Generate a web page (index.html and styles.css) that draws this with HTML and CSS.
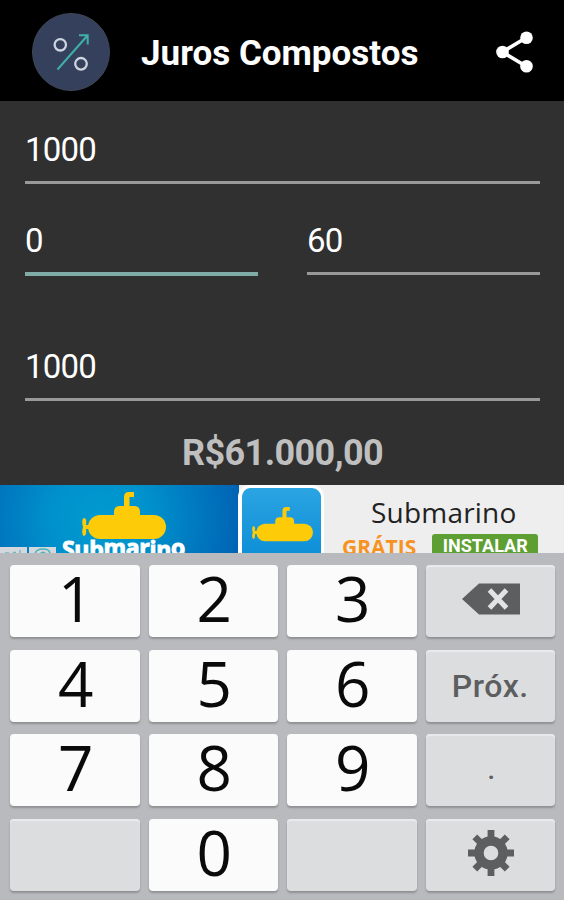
FILE: index.html
```
<!DOCTYPE html>
<html lang="pt-BR">
    <head>
        <meta charset="utf-8">
        <title>Juros Compostos</title>
        <link rel="stylesheet" href="styles.css">
    </head>
    <body>
        <header class="toolbar">
            <svg class="logo" viewBox="0 0 78 78">
                <circle cx="39" cy="39" r="38.5" fill="#34405c" stroke="#404956"/>
                <g fill="none" stroke="#ccd4df" stroke-width="2.3">
                    <circle cx="28.3" cy="31.8" r="5.7"/>
                    <circle cx="49" cy="50.8" r="5.8"/>
                </g>
                <path d="M25.5 56.5 55.5 22.5M47 22.3H55.7V31.5" fill="none" stroke="#3fafaa" stroke-width="2"/>
            </svg>
            <h1>Juros Compostos</h1>
            <svg class="share" viewBox="0 0 40 42">
                <path d="M31.5 6.5 7.5 21 31.5 35.5" fill="none" stroke="#fff" stroke-width="3.6"/>
                <g fill="#fff">
                    <circle cx="31.5" cy="6.7" r="6.3"/>
                    <circle cx="7.5" cy="21" r="6.3"/>
                    <circle cx="31.5" cy="35.2" r="6.3"/>
                </g>
            </svg>
        </header>

        <main class="form">
            <div class="field">1000</div>
            <div class="row">
                <div class="field active">0</div>
                <div class="field">60</div>
            </div>
            <div class="field deposit">1000</div>
            <div class="total">R$61.000,00</div>
        </main>

        <section class="ad">
            <div class="banner">
                <svg class="sub" viewBox="0 0 84 48">
                    <use href="#submarine"/>
                </svg>
                <div class="brand">Sub<span class="up">mar</span>in<span class="up">o</span></div>
                <div class="choices">
                    <i><svg viewBox="0 0 27 7"><path d="M5 6H9M13 5.5H16M20 3V7" stroke="#65b9b9" stroke-width="1.3"/></svg></i>
                    <i><svg viewBox="0 0 27 7"><path d="M6 7Q7 2 14 2T21 7M11 7Q14 3.5 17 7" fill="none" stroke="#45b5bd" stroke-width="1.5"/></svg></i>
                </div>
            </div>
            <div class="app">
                <svg viewBox="0 0 84 48">
                    <g id="submarine" fill="#fecb09">
                        <rect x="6" y="23" width="78" height="24" rx="12"/>
                        <path d="M32 25V20Q32 14 38 14H42V5Q42 0 47 0H52V5H47.5V14H52Q58 14 58 20V25Z"/>
                        <path d="M7 33 4 33Q5 26 2 26Q-1 27 1 35Q-1 43 2 44Q5 43 4 37L7 37Z"/>
                    </g>
                </svg>
            </div>
            <div class="info">
                <div class="name">Submarino</div>
                <div class="offer"><b>GRÁTIS</b><span>INSTALAR</span></div>
            </div>
        </section>

        <section class="keyboard">
            <div class="key">1</div>
            <div class="key">2</div>
            <div class="key">3</div>
            <div class="key fn">
                <svg class="backspace" width="58" height="32" viewBox="0 0 58 32">
                    <path d="M0 16 17 .5H58V31.5H17Z" fill="#5d5e5f"/>
                    <path d="M27.5 7 44.500 25M44.500 7 27.500 25" stroke="#e2e3e4" stroke-width="5"/>
                </svg>
            </div>
            <div class="key">4</div>
            <div class="key">5</div>
            <div class="key">6</div>
            <div class="key fn next">Próx.</div>
            <div class="key">7</div>
            <div class="key">8</div>
            <div class="key">9</div>
            <div class="key fn dot">.</div>
            <div class="key fn"></div>
            <div class="key">0</div>
            <div class="key fn"></div>
            <div class="key fn">
                <svg class="gear" width="46" height="46" viewBox="-22 -22 44 44">
                    <circle r="11.5" fill="none" stroke="#5d5e5f" stroke-width="9"/>
                    <g stroke="#5d5e5f" stroke-width="6.5">
                        <path d="M0-22V-13M0 22V13M-22 0H-13M22 0H13"/>
                        <path d="M-15.5-15.5-9-9M15.5-15.5 9-9M-15.5 15.5-9 9M15.5 15.5 9 9"/>
                    </g>
                </svg>
            </div>
        </section>
    </body>
</html>
```
FILE: styles.css
```
* {
    box-sizing: border-box;
}

body {
    margin: 0;
    width: 564px;
    height: 900px;
    overflow: hidden;
    display: flex;
    flex-direction: column;
    background: #303030;
    font-family: Roboto, sans-serif;
}

.toolbar {
    height: 101px;
    flex: none;
    display: flex;
    align-items: center;
    padding: 3px 29px 0 32px;
    background: #000;
    color: #fff;
}

.logo {
    width: 78px;
    height: 78px;
    margin-right: 31px;
}

h1 {
    margin: 3px 0 0;
    font-size: 35px;
    font-weight: 700;
    white-space: nowrap;
}

.share {
    width: 40px;
    height: 42px;
    margin-left: auto;
}

.form {
    height: 384px;
    flex: none;
    padding: 21px 24px 0 25px;
    color: #fff;
}

.field {
    height: 62px;
    flex: 1;
    padding-top: 8px;
    border-bottom: 3px solid #999;
    font-size: 33px;
    letter-spacing: -0.8px;
    line-height: 39px;
}

.row {
    display: flex;
    gap: 49px;
    margin-top: 29px;
}

.active {
    height: 63px;
    border-bottom: 4px solid #80aca8;
}

.deposit {
    margin-top: 63px;
}

.total {
    margin-top: 30px;
    text-align: center;
    font-size: 36px;
    font-weight: 700;
    letter-spacing: -0.6px;
    line-height: 44px;
    color: #bfbfbf;
}

.ad {
    height: 68px;
    flex: none;
    display: flex;
    overflow: hidden;
    background: #eee;
}

.banner {
    position: relative;
    width: 239px;
    background: radial-gradient(circle at 42% 50%, #009ad0 0, #0091cc 35%, #0062b4 100%);
}

.sub {
    display: block;
    width: 84px;
    height: 48px;
    margin: 7px 0 0 82px;
}

.brand {
    position: absolute;
    left: 62px;
    top: 50px;
    color: #fff;
    font: 700 23px/28px "Open Sans", sans-serif;
    letter-spacing: -0.3px;
    -webkit-text-stroke: 1px #fff;
    white-space: nowrap;
}

.up {
    position: relative;
    top: -2px;
}

.choices {
    position: absolute;
    left: 0;
    bottom: 0;
    display: flex;
    gap: 2px;
}

.choices i {
    width: 27px;
    height: 6px;
    background: #d4d8dc;
}

.choices svg {
    display: block;
    width: 27px;
    height: 7px;
}

.app {
    width: 86px;
    height: 84px;
    margin-left: -1px;
    flex: none;
    position: relative;
    border: 3px solid #fff;
    border-left-width: 4px;
    border-bottom: 0;
    border-radius: 12px;
    background: linear-gradient(#2ba4e2, #078bd5);
}

.app svg {
    width: 61px;
    height: 35px;
    margin: 19px 0 0 10px;
}

.info {
    flex: 1;
}

.name {
    padding: 8px 0 0 47px;
    color: #222;
    font: 400 28px/38px "Open Sans", sans-serif;
    letter-spacing: 0.2px;
}

.offer {
    display: flex;
    gap: 16px;
    padding: 3px 0 0 18px;
}

.offer b {
    color: #f7931e;
    font: 700 21px/27px "Open Sans", sans-serif;
}

.offer span {
    width: 106px;
    height: 30px;
    border-radius: 3px;
    background: #5d9f32;
    color: #fff;
    text-align: center;
    font-size: 18px;
    font-weight: 700;
    line-height: 23px;
}

.keyboard {
    height: 347px;
    flex: none;
    display: grid;
    grid-template-columns: repeat(4, 1fr);
    grid-template-rows: repeat(4, 72px);
    gap: 12.7px 9px;
    padding: 12px 9px 0 10px;
    background: #b9babe;
}

.key {
    display: flex;
    align-items: center;
    justify-content: center;
    padding: 0 0 5px 2px;
    border-radius: 4px;
    background: #fbfbfb;
    box-shadow: 0 2px 2px #8f9094;
    color: #0a0a0a;
    font: 400 62px/67px "Open Sans", sans-serif;
}

.fn {
    padding: 0;
    background: #dcdddf;
    box-shadow: 0 2px 2px #8f9094, inset 0 2px 1px #e9eaeb;
    color: #5d5e5f;
}

.backspace {
    margin: 0 0 4px 2px;
}

.gear {
    margin: 0 0 4px 2px;
}

.next {
    font: 500 32px/72px Roboto, sans-serif;
    letter-spacing: 0.6px;
}

.dot {
    padding-left: 2px;
    font: 500 27px/72px Roboto, sans-serif;
}
```
